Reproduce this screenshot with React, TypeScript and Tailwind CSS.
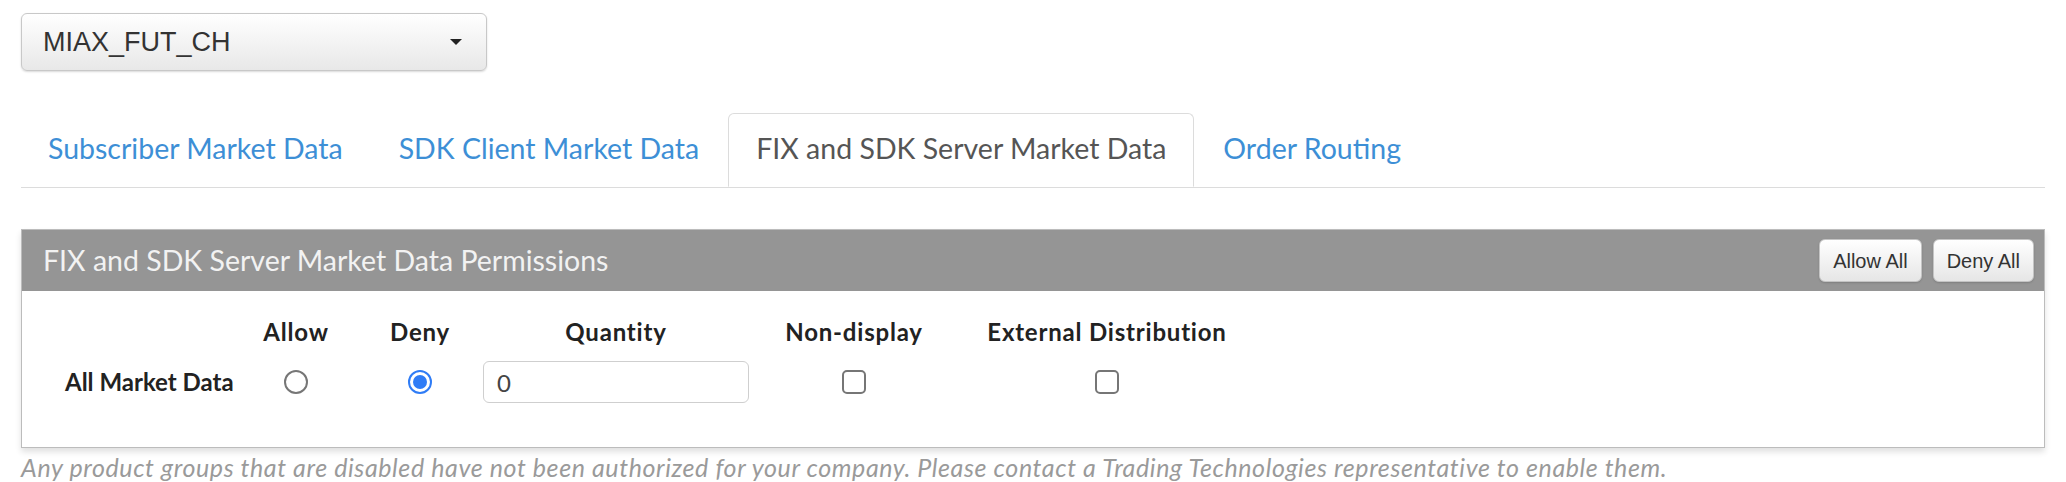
import React from 'react';

const tabs = ['Subscriber Market Data', 'SDK Client Market Data', 'FIX and SDK Server Market Data', 'Order Routing'];
const activeTab = 2;

function Radio({ checked }: { checked?: boolean }) {
  if (checked) {
    return (
      <span className="flex h-[24px] w-[24px] items-center justify-center rounded-full border-2 border-[#2f7cf6] bg-white">
        <span className="h-[14px] w-[14px] rounded-full bg-[#2f7cf6]" />
      </span>
    );
  }
  return <span className="block h-[24px] w-[24px] rounded-full border-2 border-[#767676] bg-white" />;
}

function Checkbox() {
  return <span className="block h-[24px] w-[24px] rounded-[5px] border-2 border-[#767676] bg-white" />;
}

function GradButton({ label }: { label: string }) {
  return (
    <button className="h-[43px] rounded-[6px] border border-[#c4c4c4] bg-gradient-to-b from-white to-[#e6e6e6] px-[13px] text-[20px] text-[#333] shadow-[0_1px_2px_rgba(0,0,0,0.15)] [font-family:'Liberation_Sans',Arial,sans-serif]">
      {label}
    </button>
  );
}

export default function App() {
  return (
    <div className="min-h-[482px] bg-white px-[21px] pt-[13px] text-[#333] [font-family:Lato,'Open_Sans',sans-serif]">
      {/* product picker */}
      <button className="flex h-[58px] w-[466px] items-center justify-between rounded-[6px] border border-[#c8c8c8] bg-gradient-to-b from-white to-[#e8e8e8] pl-[21px] pr-[24px] text-[27px] text-[#333] shadow-[0_1px_2px_rgba(0,0,0,0.15)] [font-family:'Liberation_Sans',Arial,sans-serif]">
        <span>MIAX_FUT_CH</span>
        <span className="h-0 w-0 border-x-[6px] border-t-[6px] border-x-transparent border-t-[#222]" />
      </button>

      {/* tabs */}
      <div className="mt-[42px] flex border-b border-[#dcdcdc]">
        {tabs.map((t, i) =>
          i === activeTab ? (
            <div
              key={t}
              className="-mb-px mr-[2px] flex h-[74px] items-center rounded-t-[6px] border border-[#dcdcdc] border-b-white bg-white px-[27px] pb-[4px] text-[28.5px] text-[#555]"
            >
              {t}
            </div>
          ) : (
            <div key={t} className="mr-[2px] flex h-[74px] items-center px-[27px] pb-[4px] text-[28.5px] text-[#3d8fd6]">
              {t}
            </div>
          )
        )}
      </div>

      {/* permissions panel */}
      <div className="mt-[41px] border border-[#bcbcbc] shadow-[0_4px_6px_rgba(0,0,0,0.12)]">
        <div className="flex h-[61px] items-center justify-between bg-[#959595] pl-[21px] pr-[10px]">
          <span className="text-[28.5px] text-[#f2f2f2]">FIX and SDK Server Market Data Permissions</span>
          <div className="flex gap-[11px]">
            <GradButton label="Allow All" />
            <GradButton label="Deny All" />
          </div>
        </div>

        <div className="pb-[44px] pt-[26px]">
          <div className="flex h-[30px] items-center text-[24px] font-bold tracking-[0.8px] text-[#222]">
            <div className="w-[228px]" />
            <div className="w-[92px] text-center">Allow</div>
            <div className="ml-[16px] w-[124px] text-center">Deny</div>
            <div className="ml-[1px] w-[266px] text-center">Quantity</div>
            <div className="ml-[20px] w-[170px] text-center">Non-display</div>
            <div className="ml-[20px] w-[296px] text-center">External Distribution</div>
          </div>
          <div className="mt-[14px] flex h-[42px] items-center">
            <div className="w-[228px] pl-[43px] text-[24px] font-bold text-[#222]">All Market Data</div>
            <div className="flex w-[92px] justify-center">
              <Radio />
            </div>
            <div className="ml-[16px] flex w-[124px] justify-center">
              <Radio checked />
            </div>
            <div className="ml-[1px] w-[266px]">
              <input
                readOnly
                value="0"
                className="h-[42px] w-full rounded-[6px] border border-[#cfcfcf] px-[13px] text-[24px] text-[#444] outline-none"
              />
            </div>
            <div className="ml-[20px] flex w-[170px] justify-center">
              <Checkbox />
            </div>
            <div className="ml-[20px] flex w-[296px] justify-center">
              <Checkbox />
            </div>
          </div>
        </div>
      </div>

      <p className="mt-[1px] text-[25px] italic tracking-[0.6px] text-[#9a9a9a]">
        Any product groups that are disabled have not been authorized for your company. Please contact a Trading Technologies representative to enable them.
      </p>
    </div>
  );
}
